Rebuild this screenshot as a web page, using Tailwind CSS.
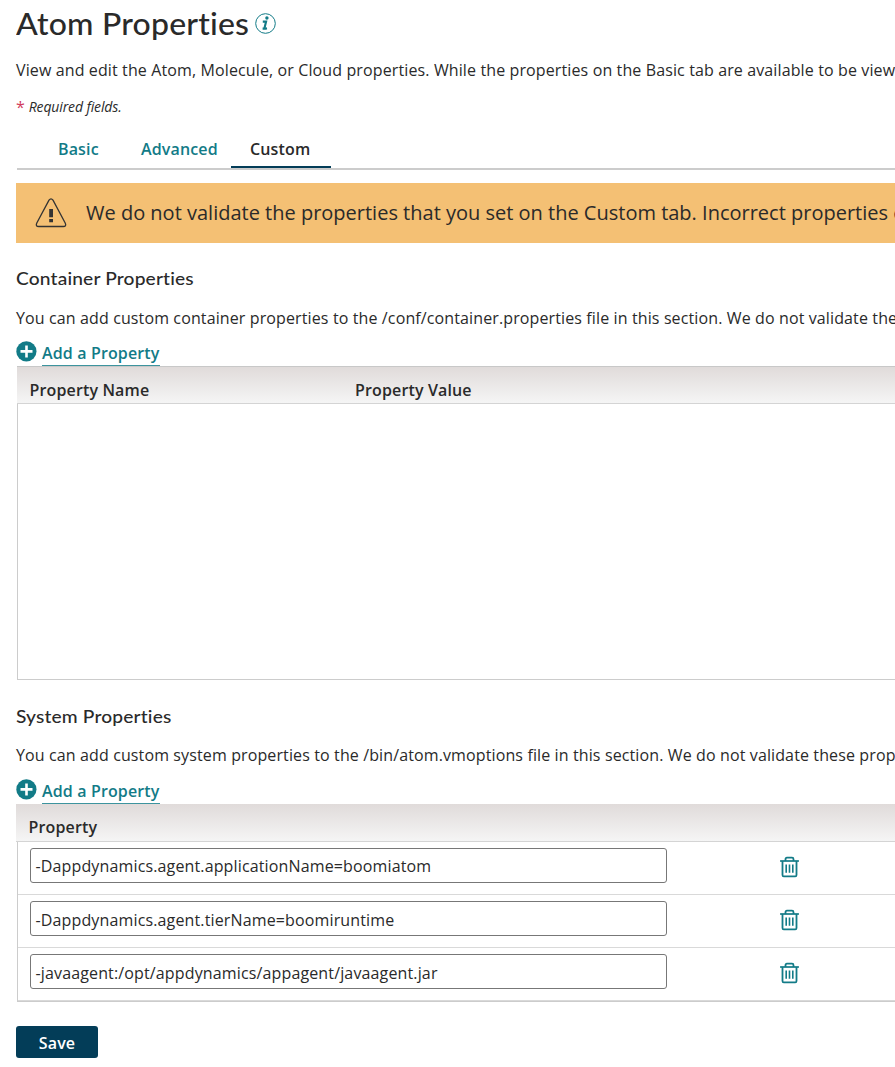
<!DOCTYPE html>
<html lang="en">
<head>
<meta charset="utf-8">
<title>Atom Properties</title>
<script src="https://cdn.jsdelivr.net/npm/@tailwindcss/browser@4"></script>
</head>
<body class="h-[1067px] overflow-hidden bg-white pl-4 font-['Open_Sans',sans-serif] text-base leading-6 tracking-[0.14px] whitespace-nowrap text-[#2a2a2a]">
<svg class="hidden">
  <symbol id="plus" viewBox="0 0 21 21"><circle cx="10.4" cy="10.4" r="10.1" fill="#127b87"/><path d="M10.5 4.4v12M4.5 10.4h12" stroke="#fff" stroke-width="2.6"/></symbol>
  <symbol id="trash" viewBox="0 0 20 22" fill="none" stroke="#127b87"><path d="M.1 5h18.8" stroke-width="1.7"/><path d="M5.5 5V3.2q0-1.5 1.5-1.5h5q1.5 0 1.5 1.5V5M2.5 5v14q0 1.4 1.3 1.4h11.4q1.3 0 1.3-1.4V5" stroke-width="1.8"/><path d="M6.2 8.5v8.3M9.5 8.5v8.3M12.8 8.5v8.3" stroke-width="1.6"/></symbol>
</svg>
<header class="flex h-[50px] items-start gap-[6px]">
  <h1 class="w-[233px] origin-left scale-x-[1.065] pt-[3px] font-['Lato',sans-serif] text-[30px] leading-10 font-medium tracking-[0.2px]">Atom Properties</h1>
  <svg class="mt-[13px] h-[21px] w-[21px]" viewBox="0 0 21 21" fill="none"><circle cx="10.5" cy="10.5" r="9.8" stroke="#127b87" stroke-width="1"/><circle cx="11.9" cy="5" r="1.7" fill="#127b87"/><path d="M7.8 8.6h3.3L9.5 15q-.2.8.6.7l1.9-.4M7.6 15.6h4" stroke="#127b87" stroke-width="2.1"/></svg>
</header>
<p class="mt-2 h-6 tracking-[0.12px]">View and edit the Atom, Molecule, or Cloud properties. While the properties on the Basic tab are available to be view</p>
<p class="mt-[13px] flex h-[23px] gap-1 text-sm leading-6 tracking-[-0.13px] italic"><span class="text-base leading-6 text-[#d13c5c] not-italic">*</span>Required fields.</p>
<nav class="mt-[14px] ml-px flex h-[38px] border-b-2 border-[#ccc] pl-[22px] leading-[34px] font-semibold text-[#127b87]">
  <a class="w-[83px] pl-[19px]">Basic</a>
  <a class="w-[109px] pl-[19px]">Advanced</a>
  <a class="w-[100px] border-b-2 border-[#033d58] pl-[19px] text-[#2a2a2a]">Custom</a>
</nav>
<div class="mt-[13px] flex h-[60px] items-center gap-[19px] bg-[#f4c074] pl-[19px] text-xl tracking-normal">
  <svg class="h-[32px] w-[32px] shrink-0" viewBox="0 0 32 32" fill="none"><path d="M14 3.2q2-2.8 4 0L30.2 26q1.6 3.5-2 3.5H3.8q-3.6 0-2-3.5Z" stroke="#333" stroke-width="1.3"/><path d="M14.2 12h3.8v8.2h-3.8zM14.2 22h3.8v3.2h-3.8z" fill="#333"/></svg>
  <span>We do not validate the properties that you set on the Custom tab. Incorrect properties c</span>
</div>

<section>
  <h2 class="mt-[23px] h-6 w-[165px] origin-left scale-x-[1.065] font-['Lato',sans-serif] text-lg leading-6 font-medium tracking-[0.15px]">Container Properties</h2>
  <p class="mt-4 h-6 tracking-[0.12px]">You can add custom container properties to the /conf/container.properties file in this section. We do not validate the</p>
  <div class="mt-[11px] flex h-[25px] gap-[5px]"><svg class="h-[21px] w-[21px]"><use href="#plus"/></svg><a class="h-[25px] border-b border-[#3d949e] font-semibold text-[#127b87]">Add a Property</a></div>
  <div class="ml-px h-[314px] border-b border-[#ccc]">
    <div class="flex h-[38px] border-t border-b border-t-[#c8c8c8] border-b-[#d4d4d4] bg-linear-to-b from-[#e0dbda] to-[#f5f5f5] pt-[11px] pl-[12.5px] font-semibold"><span class="w-[325.5px]">Property Name</span><span>Property Value</span></div>
    <div class="h-[275px] border-l border-[#ccc]"></div>
  </div>
</section>

<section>
  <h2 class="mt-6 h-6 w-[165px] origin-left scale-x-[1.065] font-['Lato',sans-serif] text-lg leading-6 font-medium tracking-[0.15px]">System Properties</h2>
  <p class="mt-[15px] h-6 tracking-[0.12px]">You can add custom system properties to the /bin/atom.vmoptions file in this section. We do not validate these prop</p>
  <div class="mt-3 flex h-[25px] gap-[5px]"><svg class="h-[21px] w-[21px]"><use href="#plus"/></svg><a class="h-[25px] border-b border-[#3d949e] font-semibold text-[#127b87]">Add a Property</a></div>
  <div class="h-[38px] border-b border-[#d4d4d4] bg-linear-to-b from-[#e0dbda] to-[#f5f5f5] pt-[11px] pl-[12.5px] font-semibold">Property</div>
  <div class="ml-px border-b border-l border-[#ccc]">
    <div class="flex h-[53px] items-start border-b border-[#d9d9d9] pt-[6px] pl-3"><div class="h-[35px] w-[637px] rounded-[3px] border border-[#777] pl-[4.5px] leading-[35px]">-Dappdynamics.agent.applicationName=boomiatom</div><svg class="mt-2 ml-[113px] h-[22px] w-5"><use href="#trash"/></svg></div>
    <div class="flex h-[53px] items-start border-b border-[#d9d9d9] pt-[6px] pl-3"><div class="h-[35px] w-[637px] rounded-[3px] border border-[#777] pl-[4.5px] leading-[37px]">-Dappdynamics.agent.tierName=boomiruntime</div><svg class="mt-2 ml-[113px] h-[22px] w-5"><use href="#trash"/></svg></div>
    <div class="flex h-[53px] items-start border-b border-[#d9d9d9] pt-[6px] pl-3"><div class="h-[35px] w-[637px] rounded-[3px] border border-[#777] pl-[4.5px] leading-[37px]">-javaagent:/opt/appdynamics/appagent/javaagent.jar</div><svg class="mt-2 ml-[113px] h-[22px] w-5"><use href="#trash"/></svg></div>
  </div>
</section>
<button class="mt-6 block h-8 w-[82px] rounded-[3px] bg-[#033d58] pt-px text-center font-semibold text-white">Save</button>
</body>
</html>
